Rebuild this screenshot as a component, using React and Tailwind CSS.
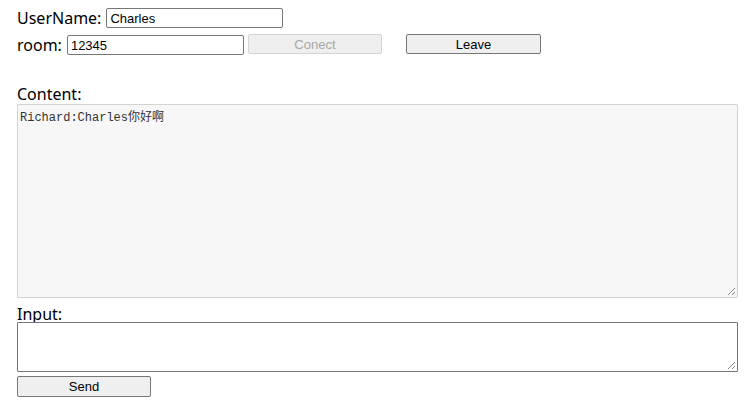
export default function App() {
  return (
    <div className="w-[750px] h-[411px] bg-white px-[17px] pt-[6px] text-black" style={{ fontFamily: '"Noto Sans", "Liberation Sans", sans-serif' }}>
      <div className="flex items-center h-[24px]">
        <span className="text-[16px] leading-[24px] mr-[5px]">UserName:</span>
        <input
          defaultValue="Charles"
          className="w-[177px] h-[20px] border border-[#767676] rounded-[2px] px-[3px] text-[13px] outline-none"
          style={{ fontFamily: '"Liberation Sans", Arial, sans-serif' }}
        />
      </div>
      <div className="flex items-center h-[24px] mt-[3px]">
        <span className="text-[16px] leading-[24px] mr-[5px]">room:</span>
        <input
          defaultValue="12345"
          className="w-[177px] h-[20px] border border-[#767676] rounded-[2px] px-[3px] text-[13px] outline-none"
          style={{ fontFamily: '"Liberation Sans", Arial, sans-serif' }}
        />
        <button
          disabled
          className="ml-[4px] w-[134px] h-[20px] -mt-[2px] bg-[#efefef] border border-[#d4d4d4] rounded-[2px] text-[13px] text-[#a8a8a8]"
          style={{ fontFamily: '"Liberation Sans", Arial, sans-serif' }}
        >
          Conect
        </button>
        <button
          className="ml-[24px] w-[135px] h-[20px] -mt-[2px] bg-[#efefef] border border-[#767676] rounded-[2px] text-[13px] text-black"
          style={{ fontFamily: '"Liberation Sans", Arial, sans-serif' }}
        >
          Leave
        </button>
      </div>
      <div className="text-[16px] leading-[22px] mt-[26px]">Content:</div>
      <div className="w-[721px] h-[194px] mt-[-1px] bg-[#f7f7f7] border border-[#d3d3d3] rounded-[1px] px-[2px] pt-[5px] relative">
        <div className="text-[12px] leading-[16px] text-[#333]" style={{ fontFamily: '"Liberation Mono", "Noto Sans CJK SC", monospace' }}>
          Richard:Charles你好啊
        </div>
        <svg className="absolute right-[1px] bottom-[1px]" width="9" height="9" viewBox="0 0 9 9">
          <path d="M8 1 L1 8 M8 5 L5 8" stroke="#8a8a8a" strokeWidth="1" />
        </svg>
      </div>
      <div className="text-[16px] leading-[22px] mt-[5px]">Input:</div>
      <div className="w-[721px] h-[50px] mt-[-3px] bg-white border border-[#767676] rounded-[1px] relative">
        <svg className="absolute right-[1px] bottom-[1px]" width="9" height="9" viewBox="0 0 9 9">
          <path d="M8 1 L1 8 M8 5 L5 8" stroke="#8a8a8a" strokeWidth="1" />
        </svg>
      </div>
      <button
        className="mt-[4px] w-[134px] h-[21px] bg-[#efefef] border border-[#767676] rounded-[2px] text-[13px] text-black block"
        style={{ fontFamily: '"Liberation Sans", Arial, sans-serif' }}
      >
        Send
      </button>
    </div>
  )
}
